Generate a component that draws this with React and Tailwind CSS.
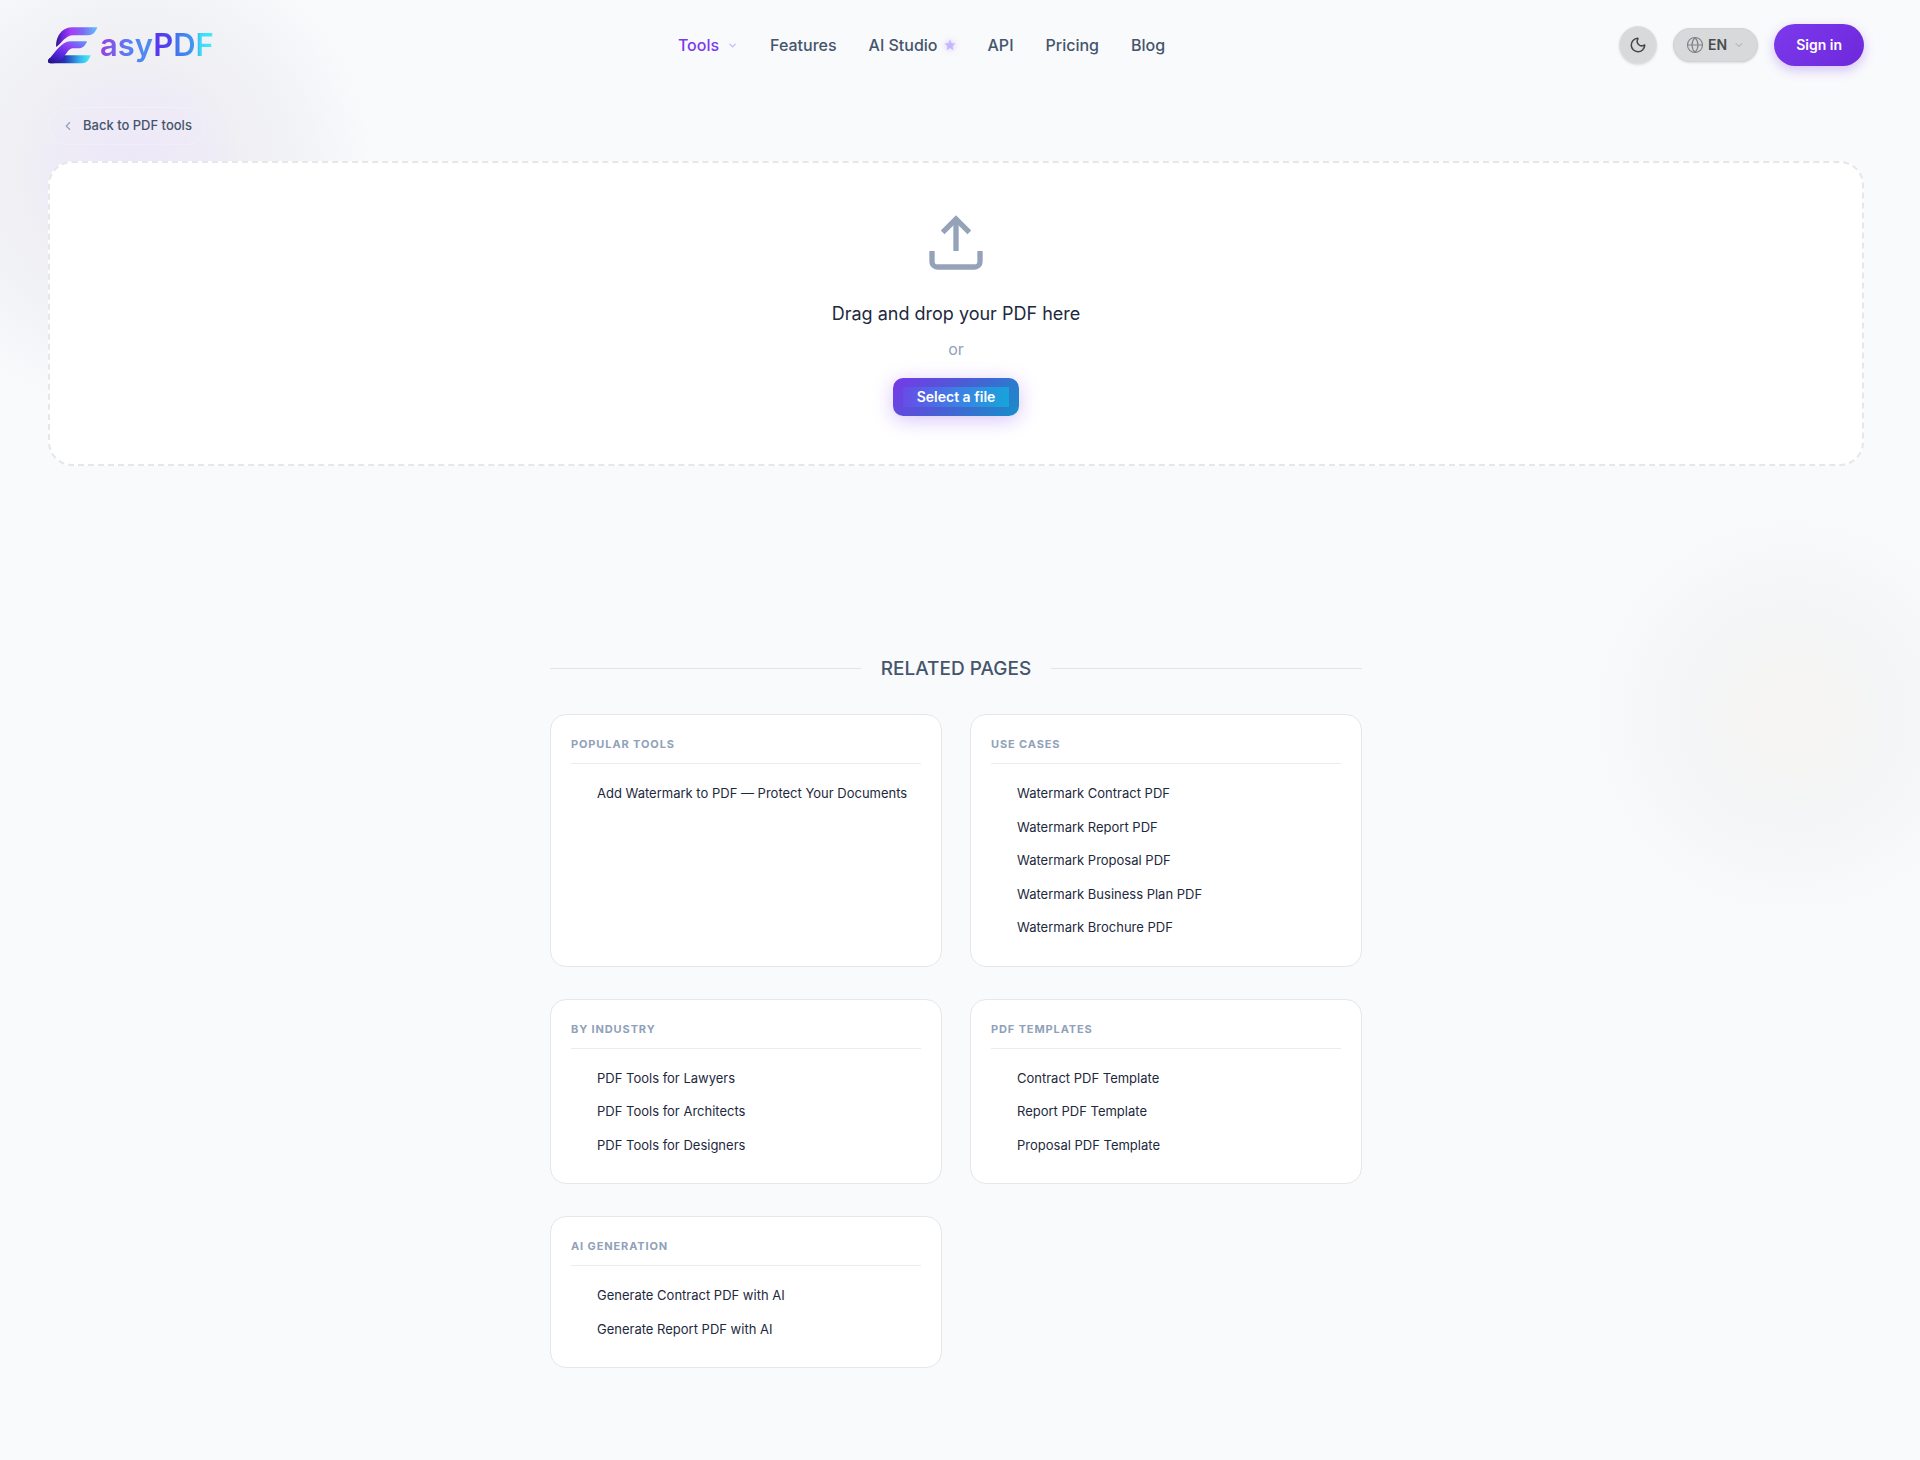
import React from "react";
import { ChevronDown, ChevronLeft, Globe, Moon } from "lucide-react";

const NAV_LINKS = [
  { label: "Tools", active: true, menu: true },
  { label: "Features" },
  { label: "AI Studio", star: true },
  { label: "API" },
  { label: "Pricing" },
  { label: "Blog" },
];

const RELATED = [
  {
    title: "Popular tools",
    links: ["Add Watermark to PDF — Protect Your Documents"],
  },
  {
    title: "Use cases",
    links: [
      "Watermark Contract PDF",
      "Watermark Report PDF",
      "Watermark Proposal PDF",
      "Watermark Business Plan PDF",
      "Watermark Brochure PDF",
    ],
  },
  {
    title: "By industry",
    links: [
      "PDF Tools for Lawyers",
      "PDF Tools for Architects",
      "PDF Tools for Designers",
    ],
  },
  {
    title: "PDF templates",
    links: [
      "Contract PDF Template",
      "Report PDF Template",
      "Proposal PDF Template",
    ],
  },
  {
    title: "AI generation",
    links: ["Generate Contract PDF with AI", "Generate Report PDF with AI"],
  },
];

function Logo() {
  return (
    <a
      href="#home"
      aria-label="EasyPDF"
      className="flex w-44 items-center gap-0.5"
    >
      <svg
        width="50"
        height="37"
        viewBox="54 50 150 111"
        aria-hidden="true"
        className="shrink-0"
      >
        <defs>
          <linearGradient id="logoTop" x1="0" y1="0" x2="1" y2="0">
            <stop offset="0" stopColor="#2f128f" />
            <stop offset="0.15" stopColor="#6a28dc" />
            <stop offset="0.35" stopColor="#a63cf5" />
            <stop offset="0.65" stopColor="#7a6cf5" />
            <stop offset="1" stopColor="#63c0fb" />
          </linearGradient>
          <linearGradient id="logoMid" x1="0" y1="1" x2="1" y2="0">
            <stop offset="0" stopColor="#1e1080" />
            <stop offset="0.35" stopColor="#5227dd" />
            <stop offset="0.65" stopColor="#8f40f5" />
            <stop offset="1" stopColor="#5b9df9" />
          </linearGradient>
          <linearGradient id="logoBase" x1="0" y1="0" x2="1" y2="0">
            <stop offset="0" stopColor="#1b0f6b" />
            <stop offset="0.4" stopColor="#2436b8" />
            <stop offset="0.75" stopColor="#35b5ee" />
            <stop offset="1" stopColor="#4af0f5" />
          </linearGradient>
        </defs>
        <path
          d="M79 110C76 86 92 51 126 51H202C197 66 188 75 174 75H130C106 75 96 98 79 110Z"
          fill="url(#logoTop)"
        />
        <path
          d="M100 135H182C177 149 170 159 156 159H62C52 159 52 150 58 144Z"
          fill="url(#logoBase)"
        />
        <path
          d="M56 147C76 128 92 94 122 93H171C166 107 158 114 146 114H128C108 115 104 156 70 159H62C53 158 52 152 56 147Z"
          fill="url(#logoMid)"
        />
      </svg>
      <span className="bg-[linear-gradient(90deg,#9a3fe0_0%,#5a7df5_25%,#4a90f0_46%,#5b35f0_48%,#4a48ee_63%,#4478ee_68%,#3f9cf0_84%,#3fd8f5_88%,#3ff0f8_100%)] bg-clip-text text-[31px] leading-9 font-semibold text-transparent">
        asyPDF
      </span>
    </a>
  );
}

function StarIcon() {
  return (
    <svg
      width="12"
      height="12"
      viewBox="0 0 24 24"
      fill="#c4b5fd"
      aria-hidden="true"
      className="drop-shadow-[0_0_3px_rgba(167,139,250,0.5)]"
    >
      <path d="M12 1l3.200 7.400 7.800.7-5.900 5.300 1.800 8L12 18.200 5.100 22.400l1.800-8L1 9.100l7.800-.7z" />
    </svg>
  );
}

function Header() {
  return (
    <header className="flex h-[90px] items-center justify-between">
      <Logo />
      <nav className="flex items-center gap-8 text-base font-medium text-slate-600">
        {NAV_LINKS.map(({ label, active, menu, star }) => (
          <a
            key={label}
            href="#nav"
            className={
              active
                ? "flex items-center gap-2 text-[#7c3aed]"
                : "flex items-center gap-1.5"
            }
          >
            {label}
            {menu && (
              <ChevronDown size={11} strokeWidth={2.5} className="text-violet-300" />
            )}
            {star && <StarIcon />}
          </a>
        ))}
      </nav>
      <div className="flex items-center gap-4">
        <button
          type="button"
          aria-label="Toggle dark mode"
          className="flex size-[38px] items-center justify-center rounded-full border border-[#dfe0e2] bg-[#d8d9db] text-[#45474a] shadow-sm"
        >
          <Moon size={18} strokeWidth={2} />
        </button>
        <button
          type="button"
          className="flex h-[34px] items-center rounded-full border border-[#d2d3d5] bg-[#d8d9db] px-3 text-sm font-semibold text-[#4a4c4f] shadow-sm"
        >
          <Globe size={18} strokeWidth={1.5} className="mr-1 text-[#7f8184]" />
          EN
          <ChevronDown size={12} strokeWidth={2} className="ml-1.5 text-[#a4a6a9]" />
        </button>
        <button
          type="button"
          className="h-[42px] rounded-full bg-[linear-gradient(135deg,#7c3aed,#6d28d9)] px-[22px] text-sm font-semibold text-white shadow-[0_4px_12px_rgba(124,58,237,0.3)]"
        >
          Sign in
        </button>
      </div>
    </header>
  );
}

function DropZone() {
  return (
    <section className="flex flex-col items-center rounded-3xl border-2 border-dashed border-[#e5e7eb] bg-white py-12">
      <svg
        width="64"
        height="64"
        viewBox="0 0 24 24"
        fill="none"
        stroke="#94a3b8"
        strokeWidth="2"
        aria-hidden="true"
      >
        <path d="M21 15v4a2 2 0 0 1-2 2H5a2 2 0 0 1-2-2v-4" />
        <path d="M17 8l-5-5-5 5" />
        <path d="M12 3v12" />
      </svg>
      <p className="mt-6 text-lg leading-[30px] text-slate-800">
        Drag and drop your PDF here
      </p>
      <p className="mt-1.5 text-base leading-7 text-slate-400">or</p>
      <button
        type="button"
        className="mt-[15px] rounded-[10px] bg-[linear-gradient(135deg,#7838e8,#4d5bd6_45%,#168fc9)] px-2.5 py-[9px] text-sm leading-5 font-semibold text-white shadow-[0_4px_20px_rgba(124,58,237,0.3)]"
      >
        <span className="block bg-[linear-gradient(100deg,#684be8,#3d7fe4_50%,#16a5da)] px-3.5">
          Select a file
        </span>
      </button>
    </section>
  );
}

function RelatedCard({ title, links }) {
  return (
    <section className="rounded-2xl border border-[#e5e7eb] bg-white p-5">
      <h3 className="mb-3.5 border-b border-[#ececef] pb-2.5 text-[11px] leading-[18px] font-bold tracking-[0.08em] text-slate-400 uppercase">
        {title}
      </h3>
      <ul className="text-[13px] leading-normal text-slate-800">
        {links.map((link) => (
          <li key={link} className="mb-0.5">
            <a href="#related" className="block py-1.5 pl-[26px]">
              {link}
            </a>
          </li>
        ))}
      </ul>
    </section>
  );
}

export default function App() {
  return (
    <div className="relative isolate min-h-screen overflow-hidden bg-[#f9fafc] pr-14 pb-20 pl-12 font-['Inter','Liberation_Sans',sans-serif]">
      {/* soft background glows */}
      <div className="absolute -top-[70px] -left-[108px] -z-10 size-[480px] rounded-full bg-[radial-gradient(circle_closest-side,#ede7f9_0%,#eeecf6_34%,#efeff4_46%,#f3f4f7_75%,#f9fafc_100%)]" />
      <div className="absolute top-[516px] -right-[72px] -z-10 size-[400px] rounded-full bg-[radial-gradient(circle_closest-side,#f7f5f3_0%,#f4f5f5_42%,#f4f5f7_55%,#f9fafc_100%)]" />

      <Header />

      <main>
        <a
          href="#tools"
          className="mt-[17px] mb-4 inline-flex h-[38px] items-center gap-2 rounded-full border border-white/20 px-3 align-top text-[13px] font-medium text-slate-600"
        >
          <ChevronLeft size={14} strokeWidth={2} className="text-slate-400" />
          Back to PDF tools
        </a>

        <DropZone />

        <div className="mx-auto mt-[188px] max-w-[812px]">
          <div className="flex items-center gap-5">
            <span className="h-px flex-1 bg-[#e2e4e8]" />
            <h2 className="pt-0.5 text-[19px] leading-[26px] font-medium text-slate-600">
              RELATED PAGES
            </h2>
            <span className="h-px flex-1 bg-[#e2e4e8]" />
          </div>
          <div className="mt-8 grid grid-cols-2 gap-x-7 gap-y-8">
            {RELATED.map((group) => (
              <RelatedCard key={group.title} {...group} />
            ))}
          </div>
        </div>
      </main>
    </div>
  );
}
